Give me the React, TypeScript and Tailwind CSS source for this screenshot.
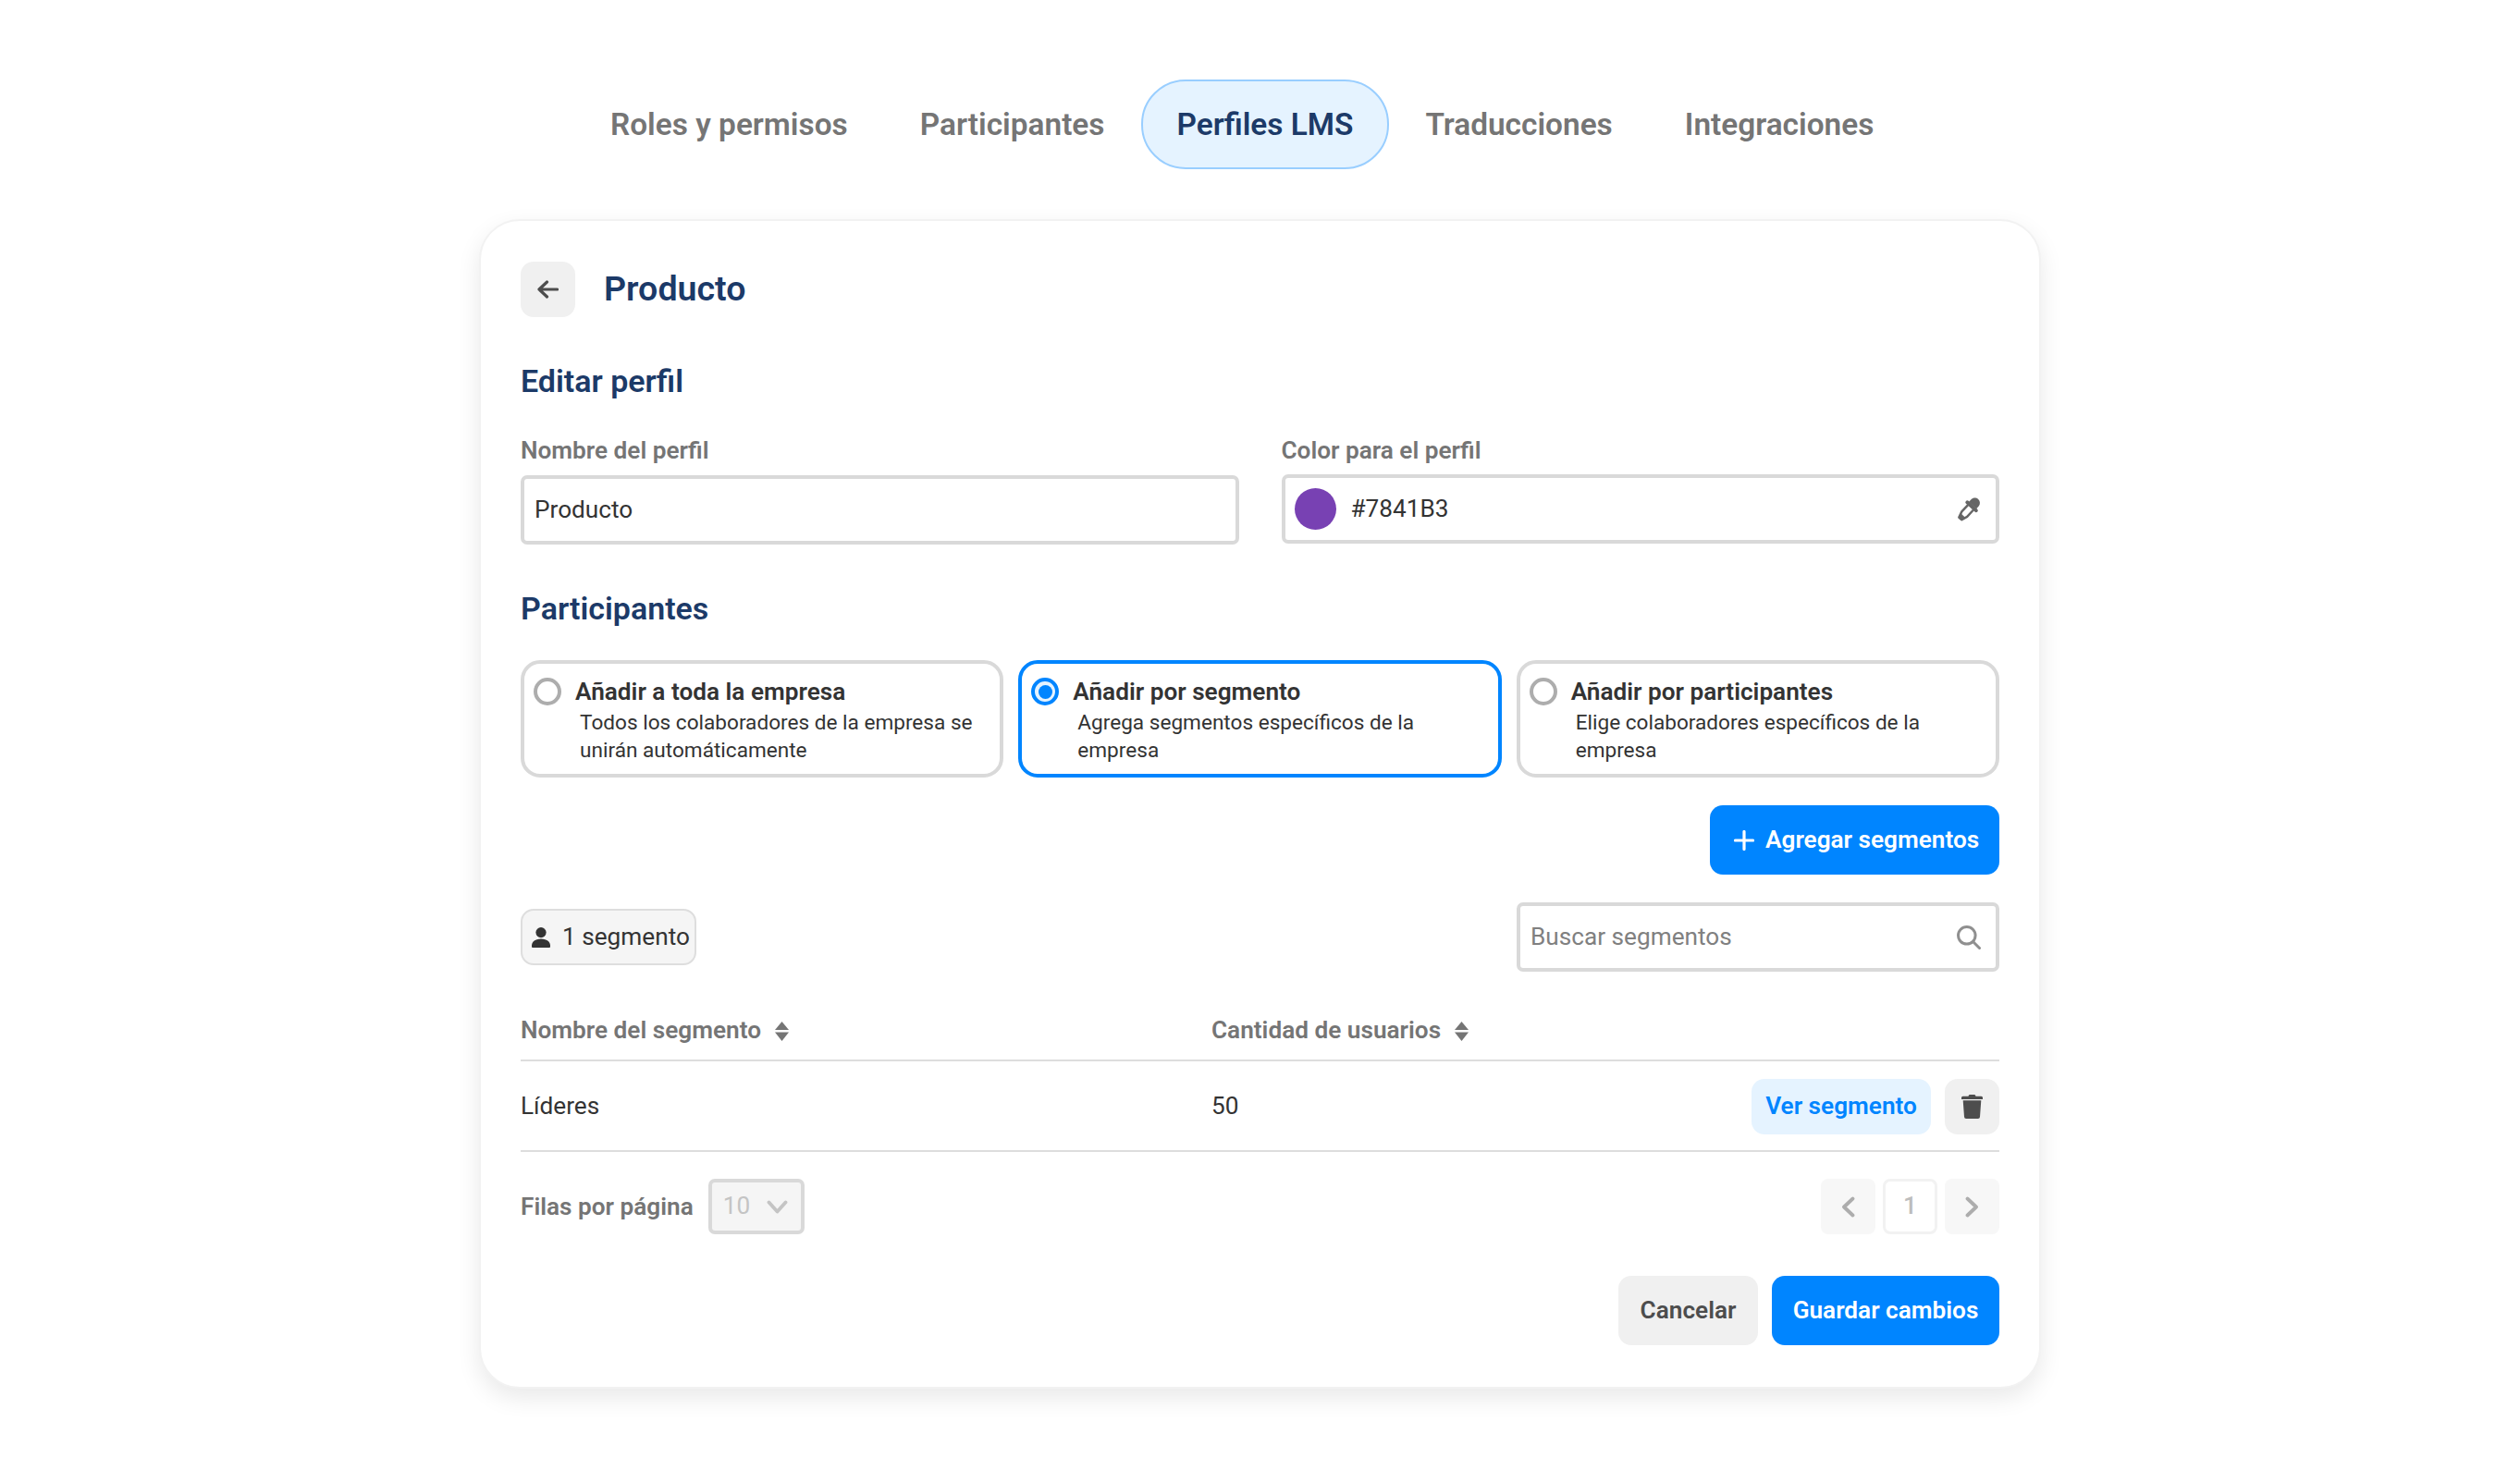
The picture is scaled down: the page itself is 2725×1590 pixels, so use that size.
const tabs = ['Roles y permisos', 'Participantes', 'Perfiles LMS', 'Traducciones', 'Integraciones'];

const options = [
  { title: 'Añadir a toda la empresa', text: 'Todos los colaboradores de la empresa se unirán automáticamente', active: false },
  { title: 'Añadir por segmento', text: 'Agrega segmentos específicos de la empresa', active: true },
  { title: 'Añadir por participantes', text: 'Elige colaboradores específicos de la empresa', active: false },
];

function SortIcon() {
  return (
    <svg viewBox="0 0 15 21" className="w-[15px] h-[21px] shrink-0" fill="#757575">
      <path d="M7.5 0 L15 9 H0 Z" />
      <path d="M0 11.5 H15 L7.5 21 Z" />
    </svg>
  );
}

function BackIcon() {
  return (
    <svg viewBox="0 0 23 20" className="w-[23px] h-[20px]" fill="none" stroke="#4d4d4d" strokeWidth="3.2" strokeLinecap="round" strokeLinejoin="round">
      <path d="M2 10 H21.5 M10.5 2 L2 10 L10.5 18" />
    </svg>
  );
}

function TrashIcon() {
  return (
    <svg viewBox="0 0 23 26" className="w-[23px] h-[26px]" fill="#4d4d4d">
      <path d="M8 0.5 Q8.2 0 9 0 H14 Q14.8 0 15 0.5 L15.5 1.8 H21.5 Q23 1.8 23 3.3 V5 H0 V3.3 Q0 1.8 1.5 1.8 H7.5 Z" />
      <path d="M1.7 6.3 H21.3 L20 24 Q19.9 26 17.9 26 H5.1 Q3.1 26 3 24 Z" />
    </svg>
  );
}

function UserIcon() {
  return (
    <svg viewBox="0 0 20 22" className="w-[20px] h-[22px] shrink-0" fill="#333333">
      <circle cx="10" cy="5.6" r="5.6" />
      <path d="M0 20 C0 15.5 4 12.5 10 12.5 C16 12.5 20 15.5 20 20 V21 Q20 22 19 22 H1 Q0 22 0 21 Z" />
    </svg>
  );
}

function PickerIcon() {
  return (
    <svg viewBox="0 0 28 28" className="w-[28px] h-[28px]">
      <g transform="rotate(43 14 14)">
        <path d="M8.5 8 V4.5 C8.5 1.5 11 -1 14 -1 C17 -1 19.5 1.5 19.5 4.5 V8 Z" fill="#666666" />
        <rect x="5.5" y="7.5" width="17" height="4" rx="2" fill="#666666" />
        <path d="M10 11 L10 21 L12 27.5 H16 L18 21 L18 11" fill="none" stroke="#666666" strokeWidth="2.4" strokeLinejoin="round" />
        <path d="M11 23 L12 28.5 H16 L17 23 Z" fill="#666666" />
      </g>
    </svg>
  );
}

function SearchIcon() {
  return (
    <svg viewBox="0 0 26 26" className="w-[26px] h-[26px]" fill="none" stroke="#8f8f8f" strokeWidth="3" strokeLinecap="round">
      <circle cx="10.8" cy="10.8" r="9.3" />
      <path d="M17.8 17.8 L24.5 24.5" />
    </svg>
  );
}

function PlusIcon() {
  return (
    <svg viewBox="0 0 22 22" className="w-[22px] h-[22px]" fill="none" stroke="white" strokeWidth="3.2" strokeLinecap="round">
      <path d="M11 1.5 V20.5 M1.5 11 H20.5" />
    </svg>
  );
}

function PageChevron({ dir }: { dir: 'left' | 'right' }) {
  return (
    <svg viewBox="0 0 15 23" className="w-[15px] h-[23px]" fill="none" stroke="#adadad" strokeWidth="3.8" strokeLinecap="round" strokeLinejoin="round">
      <path d={dir === 'left' ? 'M12.5 2.5 L3 11.5 L12.5 20.5' : 'M2.5 2.5 L12 11.5 L2.5 20.5'} />
    </svg>
  );
}

export default function App() {
  return (
    <div className="min-h-[1590px] bg-white flex flex-col items-center pt-[86px] text-[#333333] font-['Roboto',sans-serif]">
      {/* tabs */}
      <div className="self-start ml-[621px] flex items-center h-[97px]">
        {tabs.map((t) =>
          t === 'Perfiles LMS' ? (
            <div key={t} className="h-[97px] px-[37px] pt-[2px] flex items-center rounded-[48px] border-2 border-[#99ceff] bg-[#e5f3ff] text-[#1c3a68] text-[33.4px] font-semibold">
              {t}
            </div>
          ) : (
            <div key={t} className="h-[97px] px-[39px] pt-[2px] flex items-center text-[#757575] text-[33.4px] font-semibold">
              {t}
            </div>
          ),
        )}
      </div>

      {/* card */}
      <div className="mt-[54px] w-[1689px] bg-white border-2 border-[#f2f2f2] rounded-[44px] px-[43px] pt-[44px] pb-[45px] shadow-[0_10px_26px_rgba(0,0,0,0.09)]">
        <div className="flex items-center h-[60px] gap-[31px]">
          <button className="w-[59px] h-[60px] rounded-[14px] bg-[#f0f0f0] flex items-center justify-center">
            <BackIcon />
          </button>
          <h1 className="text-[37.6px] font-semibold text-[#1c3a68] pb-[2px]">Producto</h1>
        </div>

        <h2 className="mt-[48px] h-[43px] text-[34px] leading-[42px] font-semibold text-[#1c3a68]">Editar perfil</h2>

        <div className="mt-[36px] grid grid-cols-2 gap-[46px] items-start">
          <div>
            <div className="h-[34px] leading-[34px] mb-[10px] text-[26.2px] font-semibold text-[#757575]">Nombre del perfil</div>
            <div className="h-[75px] border-4 border-[#d9d9d9] rounded-[7px] pl-[11px] flex items-center text-[26.2px]">Producto</div>
          </div>
          <div>
            <div className="h-[34px] leading-[34px] mb-[9px] text-[26.2px] font-semibold text-[#757575]">Color para el perfil</div>
            <div className="h-[75px] border-4 border-[#d9d9d9] rounded-[7px] pl-[10px] pr-[15px] flex items-center text-[26.2px]">
              <span className="w-[45px] h-[45px] rounded-full bg-[#7841b3] mr-[16px]" />
              <span className="flex-1">#7841B3</span>
              <PickerIcon />
            </div>
          </div>
        </div>

        <h2 className="mt-[48px] h-[43px] text-[34px] leading-[42px] font-semibold text-[#1c3a68]">Participantes</h2>

        <div className="mt-[34px] grid grid-cols-3 gap-4">
          {options.map((o) => (
            <div key={o.title} className={`h-[127px] rounded-[21px] border-4 pl-[10px] pr-[20px] pt-[15px] flex gap-[15px] ${o.active ? 'border-[#0085ff]' : 'border-[#d9d9d9]'}`}>
              {o.active ? (
                <span className="w-[30px] h-[30px] rounded-full border-[4px] border-[#0085ff] bg-[#e5f3ff] flex items-center justify-center shrink-0">
                  <span className="w-[15px] h-[15px] rounded-full bg-[#0085ff]" />
                </span>
              ) : (
                <span className="w-[30px] h-[30px] rounded-full border-[4px] border-[#adadad] shrink-0" />
              )}
              <div>
                <div className="text-[26.2px] leading-[30px] font-semibold">{o.title}</div>
                <div className="mt-[4px] ml-[5px] text-[22.6px] leading-[30px]">{o.text}</div>
              </div>
            </div>
          ))}
        </div>

        <div className="mt-[30px] flex justify-end">
          <button className="h-[75px] w-[313px] rounded-[14px] bg-[#0085ff] text-white text-[26.2px] font-semibold flex items-center pl-[26px] gap-[12px]">
            <PlusIcon />
            Agregar segmentos
          </button>
        </div>

        <div className="mt-[30px] flex items-center justify-between">
          <div className="h-[61px] w-[190px] rounded-[14px] border-2 border-[#dedede] bg-[#f5f5f5] pl-[10px] flex items-center gap-[13px] text-[26.2px]">
            <UserIcon />
            1 segmento
          </div>
          <div className="w-[522px] h-[75px] border-4 border-[#d9d9d9] rounded-[7px] pl-[11px] pr-[16px] flex items-center justify-between text-[26.2px] text-[#808080]">
            Buscar segmentos
            <SearchIcon />
          </div>
        </div>

        {/* table */}
        <div className="mt-[31px] grid grid-cols-[747px_1fr_auto]">
          <div className="h-[66px] border-b-2 border-[#dddddd] flex items-center gap-[15px] text-[26.2px] font-semibold text-[#757575] pt-[2px]">
            Nombre del segmento <SortIcon />
          </div>
          <div className="h-[66px] border-b-2 border-[#dddddd] flex items-center gap-[15px] text-[26.2px] font-semibold text-[#757575] pt-[2px]">
            Cantidad de usuarios <SortIcon />
          </div>
          <div className="h-[66px] border-b-2 border-[#dddddd]" />
          <div className="h-[98px] pt-[2px] border-b-2 border-[#dddddd] flex items-center text-[26.2px]">Líderes</div>
          <div className="h-[98px] pt-[2px] border-b-2 border-[#dddddd] flex items-center text-[26.2px]">50</div>
          <div className="h-[98px] pt-[2px] border-b-2 border-[#dddddd] flex items-center gap-[15px]">
            <button className="w-[194px] h-[60px] rounded-[14px] bg-[#e5f3ff] text-[#0085ff] text-[26.2px] font-semibold">Ver segmento</button>
            <button className="w-[59px] h-[60px] rounded-[14px] bg-[#f0f0f0] flex items-center justify-center">
              <TrashIcon />
            </button>
          </div>
        </div>

        {/* pagination */}
        <div className="mt-[29px] flex items-center justify-between">
          <div className="flex items-center gap-[16px]">
            <span className="pt-[2px] text-[26.2px] font-semibold text-[#757575]">Filas por página</span>
            <div className="w-[104px] h-[60px] rounded-[7px] border-4 border-[#d9d9d9] bg-[#f5f5f5] pl-[12px] pr-[14px] flex items-center justify-between text-[26.2px] text-[#c4c4c4]">
              10
              <svg viewBox="0 0 23 15" className="w-[23px] h-[15px]" fill="none" stroke="#c4c4c4" strokeWidth="3.8" strokeLinecap="round" strokeLinejoin="round">
                <path d="M2.5 2.5 L11.5 12.5 L20.5 2.5" />
              </svg>
            </div>
          </div>
          <div className="flex items-center gap-[8px]">
            <button className="w-[59px] h-[60px] rounded-[8px] bg-[#f7f7f7] flex items-center justify-center">
              <PageChevron dir="left" />
            </button>
            <div className="w-[59px] h-[60px] rounded-[8px] border-[3px] border-[#f2f2f2] flex items-center justify-center text-[26.2px] font-medium text-[#bdbdbd]">1</div>
            <button className="w-[59px] h-[60px] rounded-[8px] bg-[#f7f7f7] flex items-center justify-center">
              <PageChevron dir="right" />
            </button>
          </div>
        </div>

        <div className="mt-[45px] flex justify-end gap-[15px]">
          <button className="w-[151px] h-[75px] rounded-[14px] bg-[#f0f0f0] text-[#4d4d4d] text-[26.2px] font-semibold">Cancelar</button>
          <button className="w-[246px] h-[75px] rounded-[14px] bg-[#0085ff] text-white text-[26.2px] font-semibold">Guardar cambios</button>
        </div>
      </div>
    </div>
  );
}
